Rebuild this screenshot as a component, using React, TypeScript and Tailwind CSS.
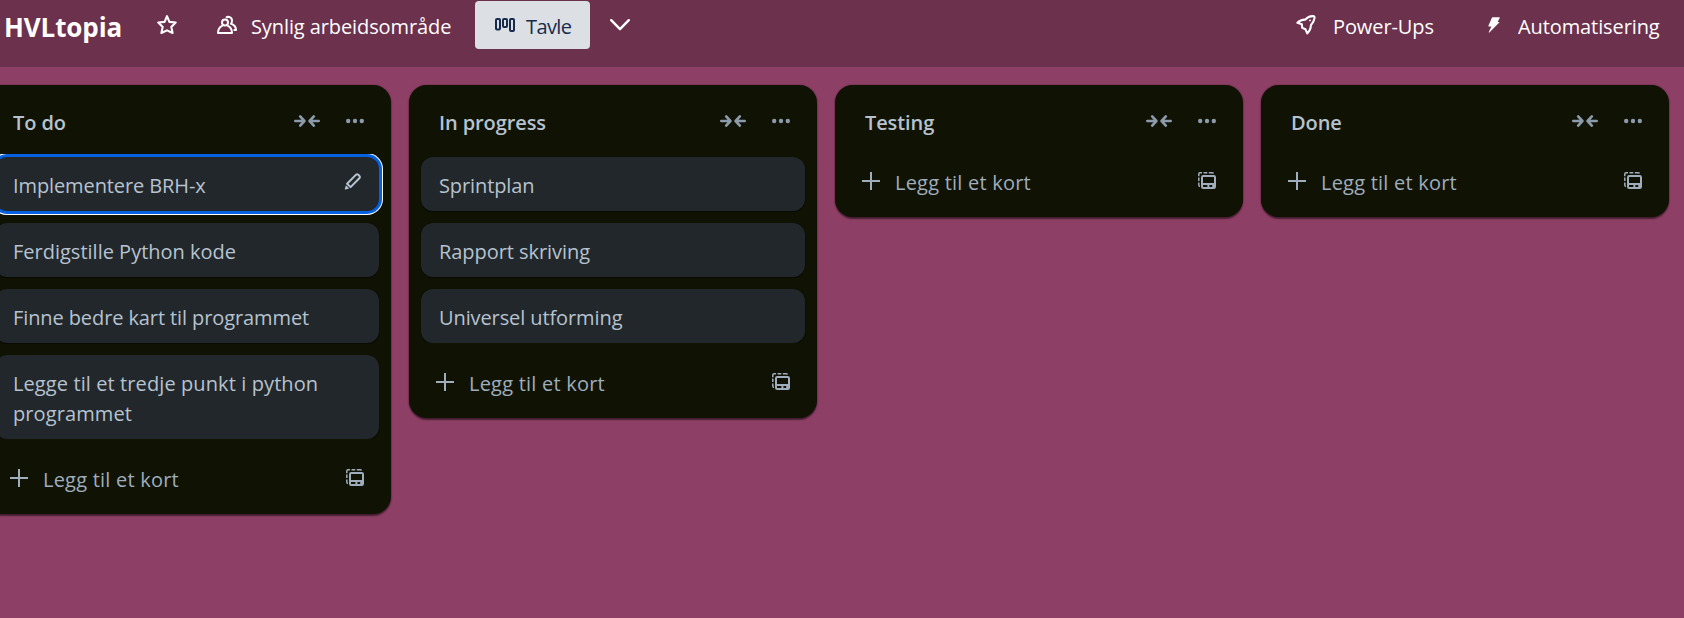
type Card = { text: string; tracking: string };
type Column = { title: string; cards: Card[] };

const tight = "tracking-[-0.1px]";
const loose = "tracking-[0.1px]";

const columns: Column[] = [
  {
    title: "To do",
    cards: [
      { text: "Implementere BRH-x", tracking: tight },
      { text: "Ferdigstille Python kode", tracking: "tracking-normal" },
      { text: "Finne bedre kart til programmet", tracking: tight },
      { text: "Legge til et tredje punkt i python programmet", tracking: loose },
    ],
  },
  {
    title: "In progress",
    cards: [
      { text: "Sprintplan", tracking: tight },
      { text: "Rapport skriving", tracking: "tracking-[-0.05px]" },
      { text: "Universel utforming", tracking: tight },
    ],
  },
  { title: "Testing", cards: [] },
  { title: "Done", cards: [] },
];

function StarIcon() {
  return (
    <svg className="h-5 w-5 shrink-0" viewBox="0 0 20 20" fill="none" stroke="currentColor" strokeWidth="2.1" strokeLinejoin="round">
      <path d="M10 1.2 12.4 6.9 18.7 7.5 14.3 11.9 15.6 18 10 15.4 4.4 18 5.7 11.9 1.3 7.5 7.6 6.9Z" />
    </svg>
  );
}

function PeopleIcon() {
  return (
    <svg className="h-5 w-5 shrink-0" viewBox="0 0 20 20" fill="none" stroke="currentColor" strokeWidth="2" strokeLinejoin="round">
      <circle cx="8" cy="7.6" r="3" />
      <path d="M5.6 10.6C3 11.7 1 14.3 1 18H15C15 14.3 13 11.7 10.4 10.6" />
      <path d="M9 2.8C11 1 15 2 15 5.6 15 7 14.6 8 14 8.8 17 9.8 19 12 19 15H16.6" />
    </svg>
  );
}

function BoardIcon() {
  return (
    <svg className="h-[14px] w-5 shrink-0" viewBox="0 0 20 14" fill="none" stroke="currentColor" strokeWidth="2">
      <rect x="1" y="1" width="4" height="10.5" rx="1" />
      <rect x="8" y="1" width="4" height="8" rx="1" />
      <rect x="15" y="1" width="4" height="12" rx="1" />
    </svg>
  );
}

function ChevronIcon() {
  return (
    <svg className="h-3 w-5 shrink-0" viewBox="0 0 20 12" fill="none" stroke="currentColor" strokeWidth="2.4" strokeLinecap="round" strokeLinejoin="round">
      <path d="M1.2 1.2 10 10.2 18.8 1.2" />
    </svg>
  );
}

function RocketIcon() {
  return (
    <svg className="h-5 w-5 shrink-0" viewBox="0 0 20 20" fill="none" stroke="currentColor" strokeWidth="2.1" strokeLinejoin="round">
      <path d="M1.4 7.8Q4.5 4.4 9.3 4.6 12.6 .8 17 1.1 18.8 1.2 18.5 3.2 18 7 14.9 10.2 14.8 15 11.2 18.4L9.4 14.2 6.2 12.8 5.8 9.2Z" />
      <circle cx="14" cy="5.4" r="0.9" fill="currentColor" stroke="none" />
    </svg>
  );
}

function BoltIcon() {
  return (
    <svg className="h-4 w-3 shrink-0" viewBox="0 0 12 16" fill="currentColor">
      <path d="M4.6 .3H11.4Q12 .3 11.7 .9L9.6 4.9H11.2Q11.8 5 11.3 5.6L1.4 15.6Q.6 15.9 .8 15L3.4 9.4H.8Q.2 9.3.4 8.8L3.9 .8Q4.1 .3 4.6 .3Z" />
    </svg>
  );
}

function CollapseIcon() {
  return (
    <svg className="h-3 w-[26px] shrink-0" viewBox="0 0 26 12" fill="none" stroke="currentColor" strokeWidth="2.6" strokeLinecap="round" strokeLinejoin="round">
      <path d="M1.3 6H10M6.2 1.4 10.4 6 6.2 10.6M24.7 6H16M19.8 1.4 15.6 6 19.8 10.6" />
    </svg>
  );
}

function DotsIcon() {
  return (
    <svg className="h-3 w-[18px] shrink-0" viewBox="0 0 18 12" fill="currentColor">
      <circle cx="2.2" cy="6" r="2.2" />
      <circle cx="9" cy="6" r="2.2" />
      <circle cx="15.8" cy="6" r="2.2" />
    </svg>
  );
}

function PencilIcon() {
  return (
    <svg className="h-[18px] w-[18px] shrink-0" viewBox="0 0 18 18" fill="none" stroke="currentColor" strokeWidth="2" strokeLinejoin="round">
      <path d="M11.8 1.9Q13 .8 14.3 1.8L15.4 2.9Q16.4 4.1 15.3 5.3L6.6 14.1 3.1 10.7Z" />
      <path d="M1.9 12.2 5.2 15.6 1.5 16.5Q.6 16.6.8 15.7Z" fill="currentColor" stroke="none" />
    </svg>
  );
}

function PlusIcon() {
  return (
    <svg className="h-[18px] w-[18px] shrink-0" viewBox="0 0 18 18" fill="none" stroke="currentColor" strokeWidth="2">
      <path d="M9 0V18M0 9H18" />
    </svg>
  );
}

function TemplateIcon() {
  return (
    <svg className="mb-px h-[17px] w-[18px] shrink-0" viewBox="0 0 18 17" fill="none" stroke="currentColor">
      <path d="M.8 4.2V2Q.8.8 2 .8H4M5.5.8H9.3M10.8.8H14Q15.2.8 15.5 1.6M.8 5.6V9M.8 10.4V13Q.8 14.2 2 14.4" strokeWidth="1.5" />
      <rect x="4" y="4" width="13" height="12" rx="1.2" strokeWidth="2" />
      <path d="M4 12H17M10.4 12V16M15.2 12V16" strokeWidth="2" />
    </svg>
  );
}

function CardItem({ card, active }: { card: Card; active: boolean }) {
  const state = active
    ? "shadow-[0_0_0_3px_#0561e2,0_0_0_4px_#ffffff]"
    : "shadow-[0_1px_1px_#03040480,0_0_1px_#03040480]";
  return (
    <li className={`flex justify-between rounded-xl bg-[#22272b] pt-[14px] pr-[17px] pb-[10px] pl-[18px] text-[#b6c2cf] ${state}`}>
      <span className={`leading-[30px] ${card.tracking}`}>{card.text}</span>
      {active && (
        <button className="mt-[2px] h-[18px]" aria-label="Rediger">
          <PencilIcon />
        </button>
      )}
    </li>
  );
}

function BoardColumn({ column, hasActive }: { column: Column; hasActive: boolean }) {
  return (
    <section className="w-[408px] shrink-0 rounded-[18px] bg-[#101204] pb-3 shadow-[0_1.5px_1.5px_#03040480,0_0_1.5px_#03040480]">
      <header className="flex h-[69px] items-start pt-[23px] pr-[27px] pl-[30px]">
        <h2 className="flex-1 text-xl leading-[30px] font-semibold tracking-[-0.1px] text-[#b6c2cf]">{column.title}</h2>
        <div className="flex items-center gap-[26px] pt-[7px] text-[#8c9bab]">
          <CollapseIcon />
          <DotsIcon />
        </div>
      </header>
      <ul className="flex flex-col gap-3 overflow-hidden px-3 pt-[3px]">
        {column.cards.map((card, i) => (
          <CardItem key={card.text} card={card} active={hasActive && i === 0} />
        ))}
      </ul>
      <div className={`flex h-12 items-center px-[27px] text-[#9fadbc] ${column.cards.length > 0 ? "mt-[15px]" : ""}`}>
        <PlusIcon />
        <span className="flex-1 pt-1 pl-[15px] leading-[30px] tracking-[0.22px]">Legg til et kort</span>
        <TemplateIcon />
      </div>
    </section>
  );
}

export default function App() {
  return (
    <div className="flex h-[618px] w-[1684px] flex-col overflow-hidden bg-[#8e3f65] font-['Open_Sans',sans-serif] text-xl">
      <nav className="h-[67px] shrink-0 bg-[#6c314c] text-white">
        <div className="flex h-[50px] items-center">
          <h1 className="w-[157px] pt-1 pl-1 text-[26px] leading-9 font-bold tracking-[-0.1px]">HVLtopia</h1>
          <StarIcon />
          <div className="ml-10 flex w-[258px] items-center">
            <PeopleIcon />
            <span className="pt-1 pl-[14px] leading-[30px] tracking-[-0.1px] whitespace-nowrap">Synlig arbeidsområde</span>
          </div>
          <button className="flex h-12 w-[115px] items-center rounded bg-[#dcdfe4] pl-5 text-[#172b4d]">
            <BoardIcon />
            <span className="pt-1 pl-[11px] leading-[30px] tracking-[-0.6px]">Tavle</span>
          </button>
          <button className="ml-5" aria-label="Visninger">
            <ChevronIcon />
          </button>
          <div className="ml-auto flex w-[388px] items-center">
            <RocketIcon />
            <span className="w-[172px] pt-1 pl-[17px] leading-[30px] tracking-[-0.1px]">Power-Ups</span>
            <BoltIcon />
            <span className="pt-1 pl-[18px] leading-[30px] tracking-[-0.1px]">Automatisering</span>
          </div>
        </div>
      </nav>
      <main className="-ml-[17px] flex items-start gap-[18px] pt-[18px]">
        {columns.map((column, i) => (
          <BoardColumn key={column.title} column={column} hasActive={i === 0} />
        ))}
      </main>
    </div>
  );
}
